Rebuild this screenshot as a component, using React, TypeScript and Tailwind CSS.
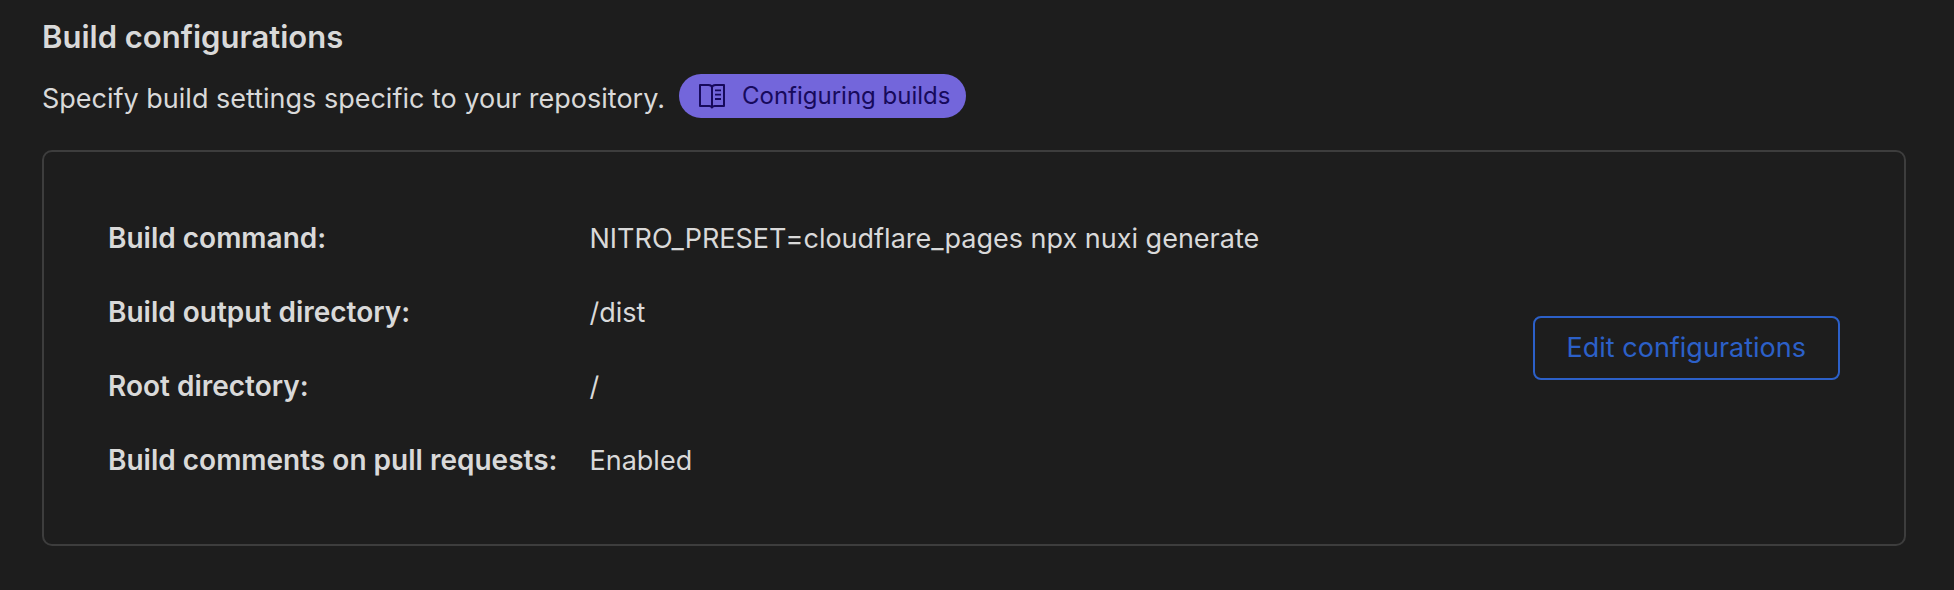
const settings = [
  { label: "Build command:", value: "NITRO_PRESET=cloudflare_pages npx nuxi generate" },
  { label: "Build output directory:", value: "/dist" },
  { label: "Root directory:", value: "/" },
  { label: "Build comments on pull requests:", value: "Enabled" },
];

function BookIcon() {
  return (
    <svg
      aria-hidden="true"
      viewBox="1 1 26 26"
      className="size-[26px] shrink-0"
      fill="none"
      stroke="currentColor"
      strokeWidth="2"
      strokeLinejoin="round"
    >
      <path d="M14 25.6c-.5-1.100-1.300-1.600-2.600-1.600H2V3h8.400c2.200 0 3.600.8 3.600 2.600V25.600z" />
      <path d="M14 25.600c.5-1.100 1.300-1.600 2.600-1.600H26V3h-8.400c-2.200 0-3.600.8-3.600 2.600" />
      <path d="M17 8.300h6M17 12.700h6M17 17h6" strokeWidth="1.800" />
    </svg>
  );
}

export default function App() {
  return (
    <main className="min-h-screen bg-[#1d1d1d] pt-[17px] pr-12 pb-11 pl-[42px] font-['Inter',sans-serif] text-[#d9d9d9]">
      <h2 className="text-[31px] leading-10 font-semibold">Build configurations</h2>
      <div className="mt-[17px] mb-8 flex flex-wrap items-center gap-3.5">
        <p className="pt-1.5 text-[27px] leading-[38px]">Specify build settings specific to your repository.</p>
        <a
          href="#configuring-builds"
          className="flex items-center gap-[17px] rounded-full bg-[#7366db] py-1 pr-4 pl-5 text-2xl leading-9 text-[#170a5c]"
        >
          <BookIcon />
          Configuring builds
        </a>
      </div>
      <section className="flex items-center justify-between gap-8 rounded-[10px] border-2 border-[#3d3d3d] px-16 py-[62px]">
        <dl className="grid grid-cols-[auto_1fr] items-baseline gap-x-8 gap-y-[31px] pt-[3px] text-[27px] leading-[42px]">
          {settings.map(({ label, value }) => (
            <div key={label} className="contents">
              <dt className="text-[28px] font-semibold">{label}</dt>
              <dd>{value}</dd>
            </div>
          ))}
        </dl>
        <button
          type="button"
          className="shrink-0 rounded-lg border-2 border-[#2c60c8] px-8 py-[10px] text-[27px] leading-10 text-[#2c60c8]"
        >
          Edit configurations
        </button>
      </section>
    </main>
  );
}
